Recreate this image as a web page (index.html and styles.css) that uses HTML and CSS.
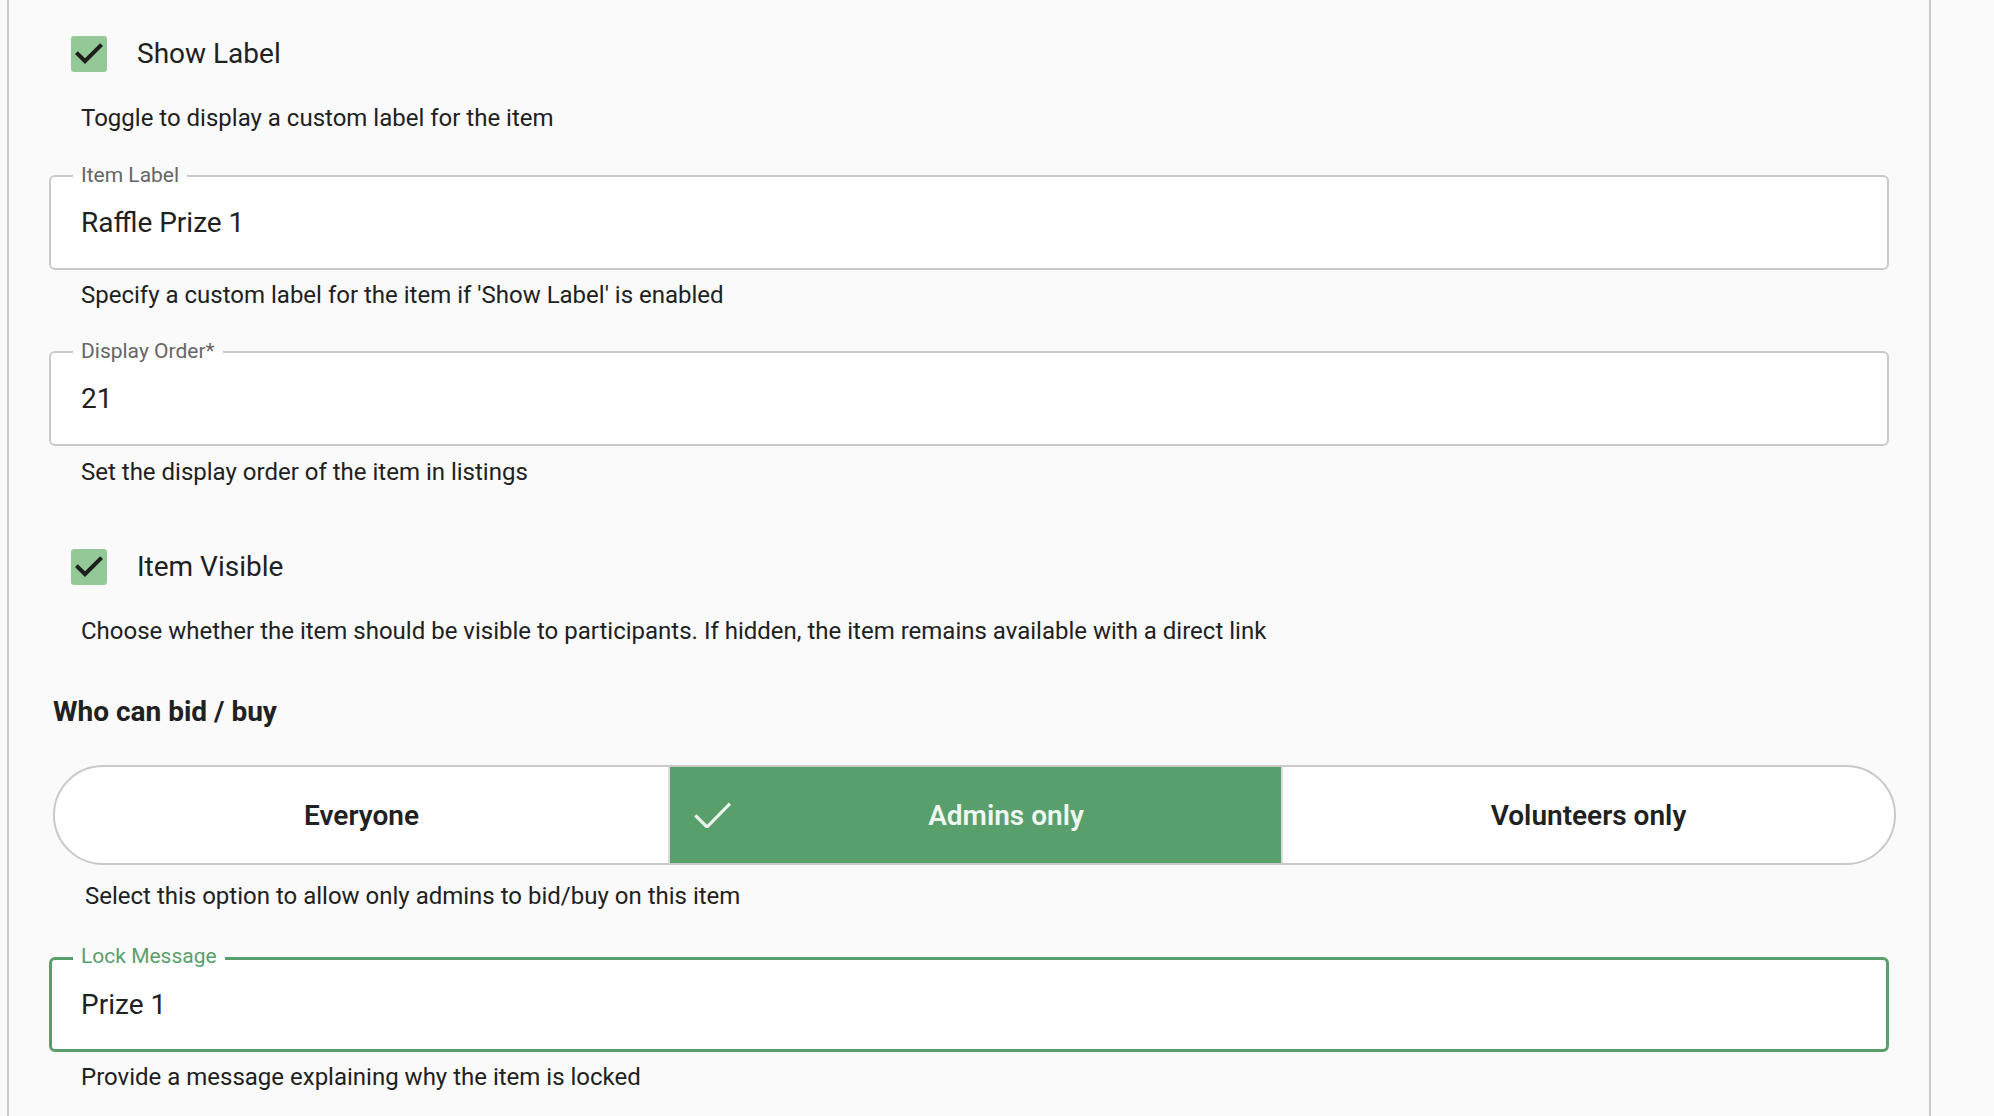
FILE: index.html
```html
<!DOCTYPE html>
<html lang="en">
<head>
<meta charset="utf-8">
<title>Item settings</title>
<link rel="stylesheet" href="styles.css">
</head>
<body>
<div class="panel">
  <label class="check-row">
    <svg class="checkbox" viewBox="3 3 18 18" aria-hidden="true">
      <rect x="3" y="3" width="18" height="18" rx="1.6" fill="#93c897"/>
      <path d="M10 17l-5-5 1.41-1.41L10 14.17l7.59-7.59L19 8l-9 9z" fill="#1e1e1e"/>
    </svg>
    <span class="check-label">Show Label</span>
  </label>
  <p class="helper h1">Toggle to display a custom label for the item</p>

  <div class="field f1">
    <span class="field-label">Item Label</span>
    <span class="field-value">Raffle Prize 1</span>
  </div>
  <p class="helper h2">Specify a custom label for the item if 'Show Label' is enabled</p>

  <div class="field f2">
    <span class="field-label">Display Order*</span>
    <span class="field-value">21</span>
  </div>
  <p class="helper h3">Set the display order of the item in listings</p>

  <label class="check-row c2">
    <svg class="checkbox" viewBox="3 3 18 18" aria-hidden="true">
      <rect x="3" y="3" width="18" height="18" rx="1.6" fill="#93c897"/>
      <path d="M10 17l-5-5 1.41-1.41L10 14.17l7.59-7.59L19 8l-9 9z" fill="#1e1e1e"/>
    </svg>
    <span class="check-label">Item Visible</span>
  </label>
  <p class="helper h4">Choose whether the item should be visible to participants. If hidden, the item remains available with a direct link</p>

  <h2 class="section-title">Who can bid / buy</h2>
  <div class="toggle-group">
    <div class="toggle"><span class="toggle-text">Everyone</span></div>
    <div class="toggle selected">
      <svg class="toggle-check" viewBox="0 0 37 26" aria-hidden="true">
        <polyline points="1.3,13.3 13,25 36,1.6" fill="none" stroke="#eaf4ec" stroke-width="3.2"/>
      </svg>
      <span class="toggle-text">Admins only</span>
    </div>
    <div class="toggle"><span class="toggle-text">Volunteers only</span></div>
  </div>
  <p class="helper indented h5">Select this option to allow only admins to bid/buy on this item</p>

  <div class="field focused f3">
    <span class="field-label">Lock Message</span>
    <span class="field-value">Prize 1</span>
  </div>
  <p class="helper h6">Provide a message explaining why the item is locked</p>
</div>
</body>
</html>
```

FILE: styles.css
```css
* { box-sizing: border-box; }

html, body {
  margin: 0;
  padding: 0;
  background: #fafafa;
}

body {
  font-family: Roboto, "Noto Sans", "Liberation Sans", sans-serif;
  color: #212121;
}

.panel {
  margin-left: 7px;
  width: 1924px;
  height: 1116px;
  overflow: hidden;
  border-left: 2px solid #c9c9c9;
  border-right: 2px solid #c9c9c9;
  padding: 36px 40px 0 40px;
  display: flex;
  flex-direction: column;
}

.check-row {
  display: flex;
  align-items: center;
  gap: 30px;
  height: 36px;
  padding-left: 22px;
}

.check-row.c2 { margin-top: 63px; }

.checkbox {
  width: 36px;
  height: 36px;
  flex: none;
  display: block;
}

.check-label {
  font-size: 28px;
  line-height: 36px;
}

.helper {
  margin: 0;
  font-size: 24px;
  line-height: 28px;
  padding-left: 32px;
}

.helper.indented { padding-left: 36px; }

.h1 { margin-top: 32px; }
.h2 { margin-top: 11px; }
.h3 { margin-top: 12px; }
.h4 { margin-top: 32px; }
.h5 { margin-top: 17px; }
.h6 { margin-top: 11px; }

.field {
  position: relative;
  height: 95px;
  border: 2px solid #c9c9c9;
  border-radius: 6px;
  background: #fff;
  display: flex;
  align-items: center;
  padding-left: 30px;
  font-size: 28px;
  color: #212121;
}

.f1 { margin-top: 43px; }
.f2 { margin-top: 42px; }
.f3 { margin-top: 47px; }

.field-label {
  position: absolute;
  left: 22px;
  top: -12px;
  padding: 0 8px;
  font-size: 21px;
  line-height: 20px;
  color: #666;
  background: linear-gradient(#fafafa 11px, #fff 11px);
}

.field.focused {
  height: 95px;
  border: 3px solid #599f6c;
  padding-left: 29px;
}

.field.focused .field-label {
  left: 21px;
  top: -14px;
  color: #599f6c;
  background: linear-gradient(#fafafa 12px, #fff 12px);
}

.section-title {
  margin: 51px 0 0 4px;
  font-size: 28px;
  line-height: 32px;
  font-weight: 700;
  color: #212121;
}

.toggle-group {
  margin: 37px -7px 0 4px;
  height: 100px;
  display: grid;
  grid-template-columns: repeat(3, 1fr);
  border: 2px solid #c9c9c9;
  border-radius: 50px;
  overflow: hidden;
  background: #fff;
}

.toggle {
  display: flex;
  align-items: center;
  justify-content: center;
  font-size: 28px;
  font-weight: 600;
  color: #212121;
}

.toggle + .toggle { border-left: 2px solid #dcdcdc; }

.toggle.selected {
  background: #599f6c;
  color: #eef6ef;
  justify-content: flex-start;
  padding-left: 24px;
}

.toggle.selected .toggle-text {
  flex: 1;
  text-align: center;
}

.toggle-check {
  width: 37px;
  height: 26px;
  flex: none;
  display: block;
}
```
